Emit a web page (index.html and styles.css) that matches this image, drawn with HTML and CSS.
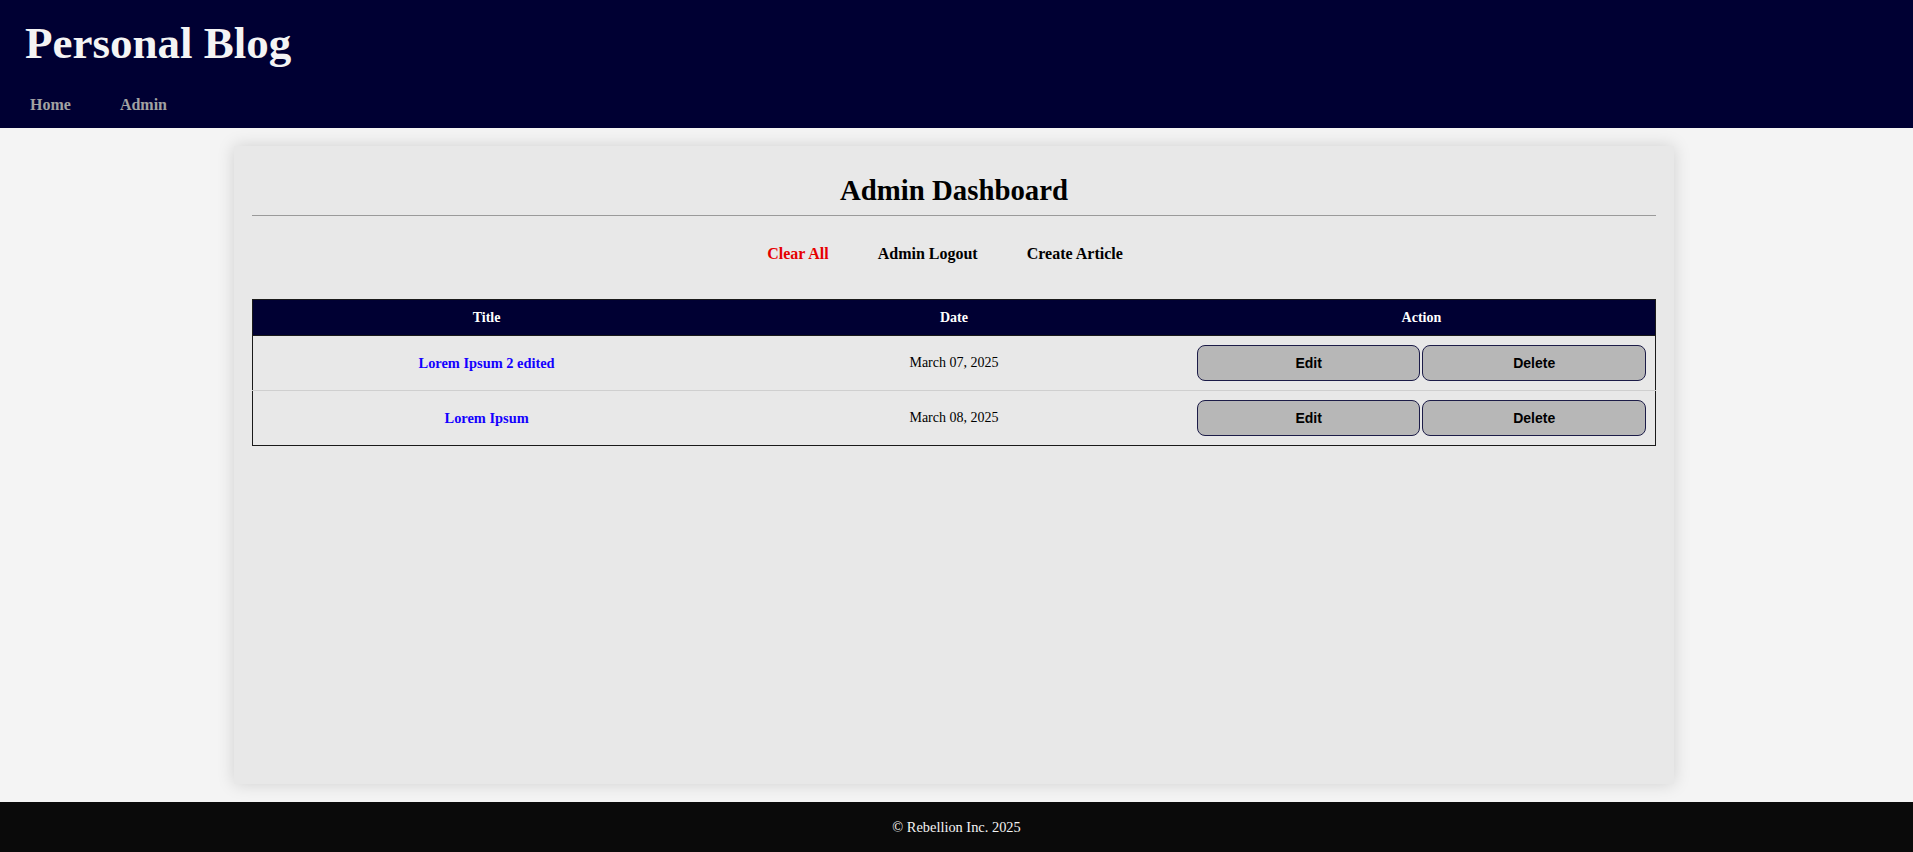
FILE: index.html
```html
<!DOCTYPE html>
<html lang="en">
<head>
<meta charset="utf-8">
<title>Personal Blog - Admin</title>
<link rel="stylesheet" href="styles.css">
</head>
<body>
<header class="site-header">
  <h1 class="site-title">Personal Blog</h1>
  <nav class="site-nav">
    <a href="#" class="nav-link">Home</a>
    <a href="#" class="nav-link">Admin</a>
  </nav>
</header>
<main class="main">
  <section class="card">
    <h2 class="card-title">Admin Dashboard</h2>
    <hr class="divider">
    <div class="actions">
      <a href="#" class="action-link danger">Clear All</a>
      <a href="#" class="action-link">Admin Logout</a>
      <a href="#" class="action-link">Create Article</a>
    </div>
    <table class="articles">
      <thead>
        <tr>
          <th>Title</th>
          <th>Date</th>
          <th>Action</th>
        </tr>
      </thead>
      <tbody>
        <tr>
          <td><a href="#" class="article-link">Lorem Ipsum 2 edited</a></td>
          <td>March 07, 2025</td>
          <td><div class="btns"><button class="btn">Edit</button><button class="btn">Delete</button></div></td>
        </tr>
        <tr>
          <td><a href="#" class="article-link">Lorem Ipsum</a></td>
          <td>March 08, 2025</td>
          <td><div class="btns"><button class="btn">Edit</button><button class="btn">Delete</button></div></td>
        </tr>
      </tbody>
    </table>
  </section>
</main>
<footer class="site-footer">© Rebellion Inc. 2025</footer>
</body>
</html>
```
FILE: styles.css
```css
html, body {
  margin: 0;
  padding: 0;
}
body {
  font-family: "Liberation Serif", "Times New Roman", serif;
  background: #f4f4f4;
  color: #000;
  min-height: 100vh;
  display: flex;
  flex-direction: column;
}
.site-header {
  background: #000033;
  padding: 17px 0 14px 25px;
  height: 128px;
  box-sizing: border-box;
}
.site-title {
  margin: 0;
  font-size: 45px;
  line-height: 52px;
  font-weight: bold;
  color: #f4f4f4;
}
.site-nav {
  margin: 27px 0 0 5px;
  display: flex;
  gap: 49px;
  line-height: 18px;
}
.nav-link {
  color: #a2a2a2;
  font-weight: bold;
  font-size: 16px;
  text-decoration: none;
}
.main {
  flex: 1;
  display: flex;
  flex-direction: column;
  padding: 18px 5px 18px 0;
}
.card {
  flex: 1;
  width: 1440px;
  box-sizing: border-box;
  margin: 0 auto;
  background: #e8e8e8;
  padding: 18px;
  box-shadow: 0 0 16px rgba(0, 0, 0, 0.15);
}
.card-title {
  margin: 10px 0 9px;
  font-size: 28.8px;
  line-height: 32px;
  text-align: center;
  font-weight: bold;
}
.divider {
  margin: 0;
  border: 0;
  border-top: 1px solid #9a9a9a;
}
.actions {
  margin-top: 29px;
  display: flex;
  justify-content: center;
  gap: 49px;
  padding-right: 18px;
  line-height: 18px;
}
.action-link {
  font-size: 16px;
  font-weight: bold;
  color: #000;
  text-decoration: none;
}
.action-link.danger {
  color: #e60000;
}
.articles {
  margin-top: 36px;
  width: 100%;
  border-collapse: collapse;
  table-layout: fixed;
  border: 1px solid #1a1a1a;
  font-size: 14px;
}
.articles th {
  background: #000033;
  color: #fff;
  font-weight: bold;
  padding: 10px 8px;
  line-height: 15px;
  border-bottom: 1px solid #1a1a1a;
}
.articles td {
  text-align: center;
  vertical-align: middle;
  padding: 9px;
  border-bottom: 1px solid #cfcfcf;
}
.articles tbody tr:last-child td {
  border-bottom: 1px solid #1a1a1a;
}
.article-link {
  color: #1400ff;
  font-weight: bold;
  font-size: 14.4px;
  text-decoration: none;
}
.btns {
  display: flex;
  gap: 2px;
}
.btn {
  flex: 1;
  height: 36px;
  background: #b7b7b7;
  border: 1px solid #1c1c48;
  border-radius: 8px;
  font-family: "Liberation Sans", Arial, sans-serif;
  font-weight: bold;
  font-size: 14px;
  color: #000;
  padding: 0;
}
.site-footer {
  background: #0a0a0a;
  color: #f4f4f4;
  height: 50px;
  display: flex;
  align-items: center;
  justify-content: center;
  font-size: 14.4px;
}
```
